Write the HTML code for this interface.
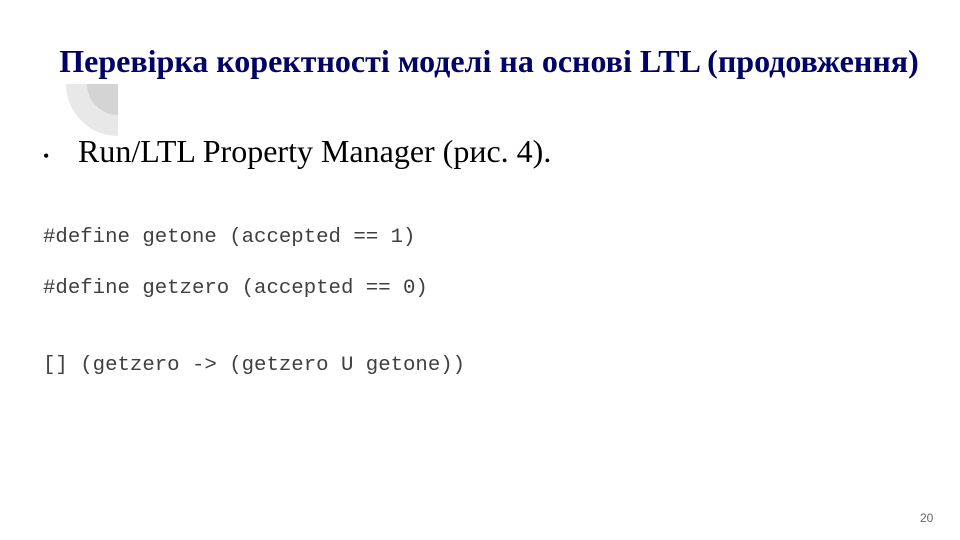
<!DOCTYPE html>
<html><head><meta charset="utf-8"><style>
body{margin:0;width:960px;height:540px;background:#fff;position:relative;overflow:hidden;font-family:"Liberation Serif","Noto Serif CJK SC",serif}
.t{position:absolute;left:0;width:978px;text-align:center;top:43px;font-weight:bold;font-size:32px;color:#000066;white-space:nowrap}
.q1{position:absolute;left:66px;top:32px;width:104px;height:104px;background:#e8e8e8;border-radius:50%;clip-path:inset(52px 52px 0 0)}
.q2{position:absolute;left:87px;top:53px;width:62px;height:62px;background:#d4d4d4;border-radius:50%;clip-path:inset(31px 31px 0 0)}
.b{position:absolute;left:78px;top:133px;font-size:32px;color:#000;white-space:nowrap}
.dot{position:absolute;left:43px;top:146px;font-size:18px}
.m{position:absolute;left:43px;font-family:"Liberation Mono",monospace;font-size:20.7px;color:#404040;white-space:pre}
.n{position:absolute;left:920px;top:511px;font-family:"Liberation Sans",sans-serif;font-size:12px;color:#666}
</style></head><body>
<div class="q1"></div><div class="q2"></div>
<div class="t">Перевірка коректності моделі на основі LTL (продовження)</div>
<div class="dot">•</div>
<div class="b">Run/LTL Property Manager (рис. 4).</div>
<div class="m" style="top:226px">#define getone (accepted == 1)</div>
<div class="m" style="top:277px">#define getzero (accepted == 0)</div>
<div class="m" style="top:354px">[] (getzero -&gt; (getzero U getone))</div>
<div class="n">20</div>
</body></html>
